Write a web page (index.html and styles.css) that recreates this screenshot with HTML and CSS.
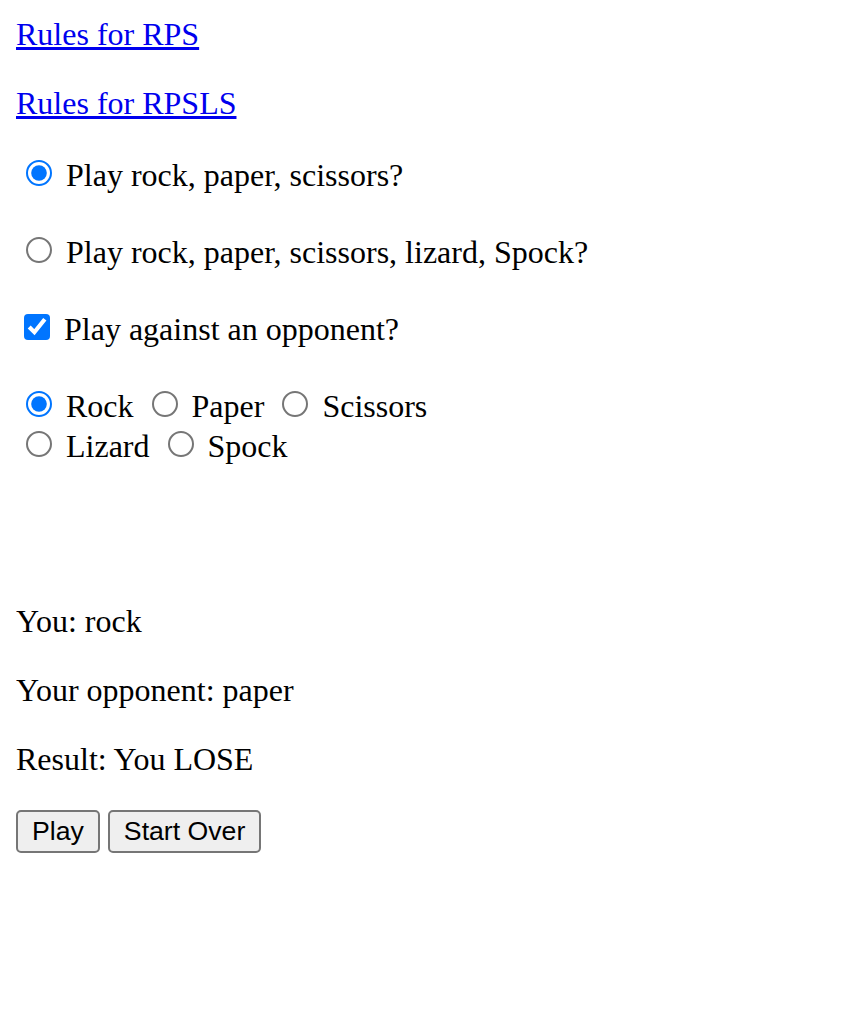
FILE: index.html
```html
<!DOCTYPE html>
<html>
<head>
<meta charset="utf-8">
<title>RPS</title>
<link rel="stylesheet" href="styles.css">
</head>
<body class="page">
<a class="rules-link" href="#">Rules for RPS</a>
<p class="para"><a class="rules-link" href="#">Rules for RPSLS</a></p>
<p class="para option"><input type="radio" name="game" checked> Play rock, paper, scissors?</p>
<p class="para option"><input type="radio" name="game"> Play rock, paper, scissors, lizard, Spock?</p>
<p class="para option"><input type="checkbox" checked> Play against an opponent?</p>
<div class="choices">
<input type="radio" name="choice" checked> Rock <input type="radio" name="choice"> Paper <input type="radio" name="choice"> Scissors<br>
<input type="radio" name="choice"> Lizard <input type="radio" name="choice"> Spock
</div>
<p class="para spacer"><br><br></p>
<p class="para">You: rock</p>
<p class="para">Your opponent: paper</p>
<p class="para">Result: You LOSE</p>
<button class="btn">Play</button> <button class="btn">Start Over</button>
</body>
</html>
```
FILE: styles.css
```css
html {
  background: #fff;
}
.page {
  zoom: 2;
  margin: 8px;
  font-family: "Liberation Serif", "Times New Roman", serif;
  font-size: 16px;
  color: #000;
}
.rules-link {
  color: #0000ee;
}
.para {
  margin: 16px 0;
}
.option {
  padding-bottom: 2.5px;
}
.btn {
  font-family: "Liberation Sans", Arial, sans-serif;
  font-size: 13.333px;
}
```
